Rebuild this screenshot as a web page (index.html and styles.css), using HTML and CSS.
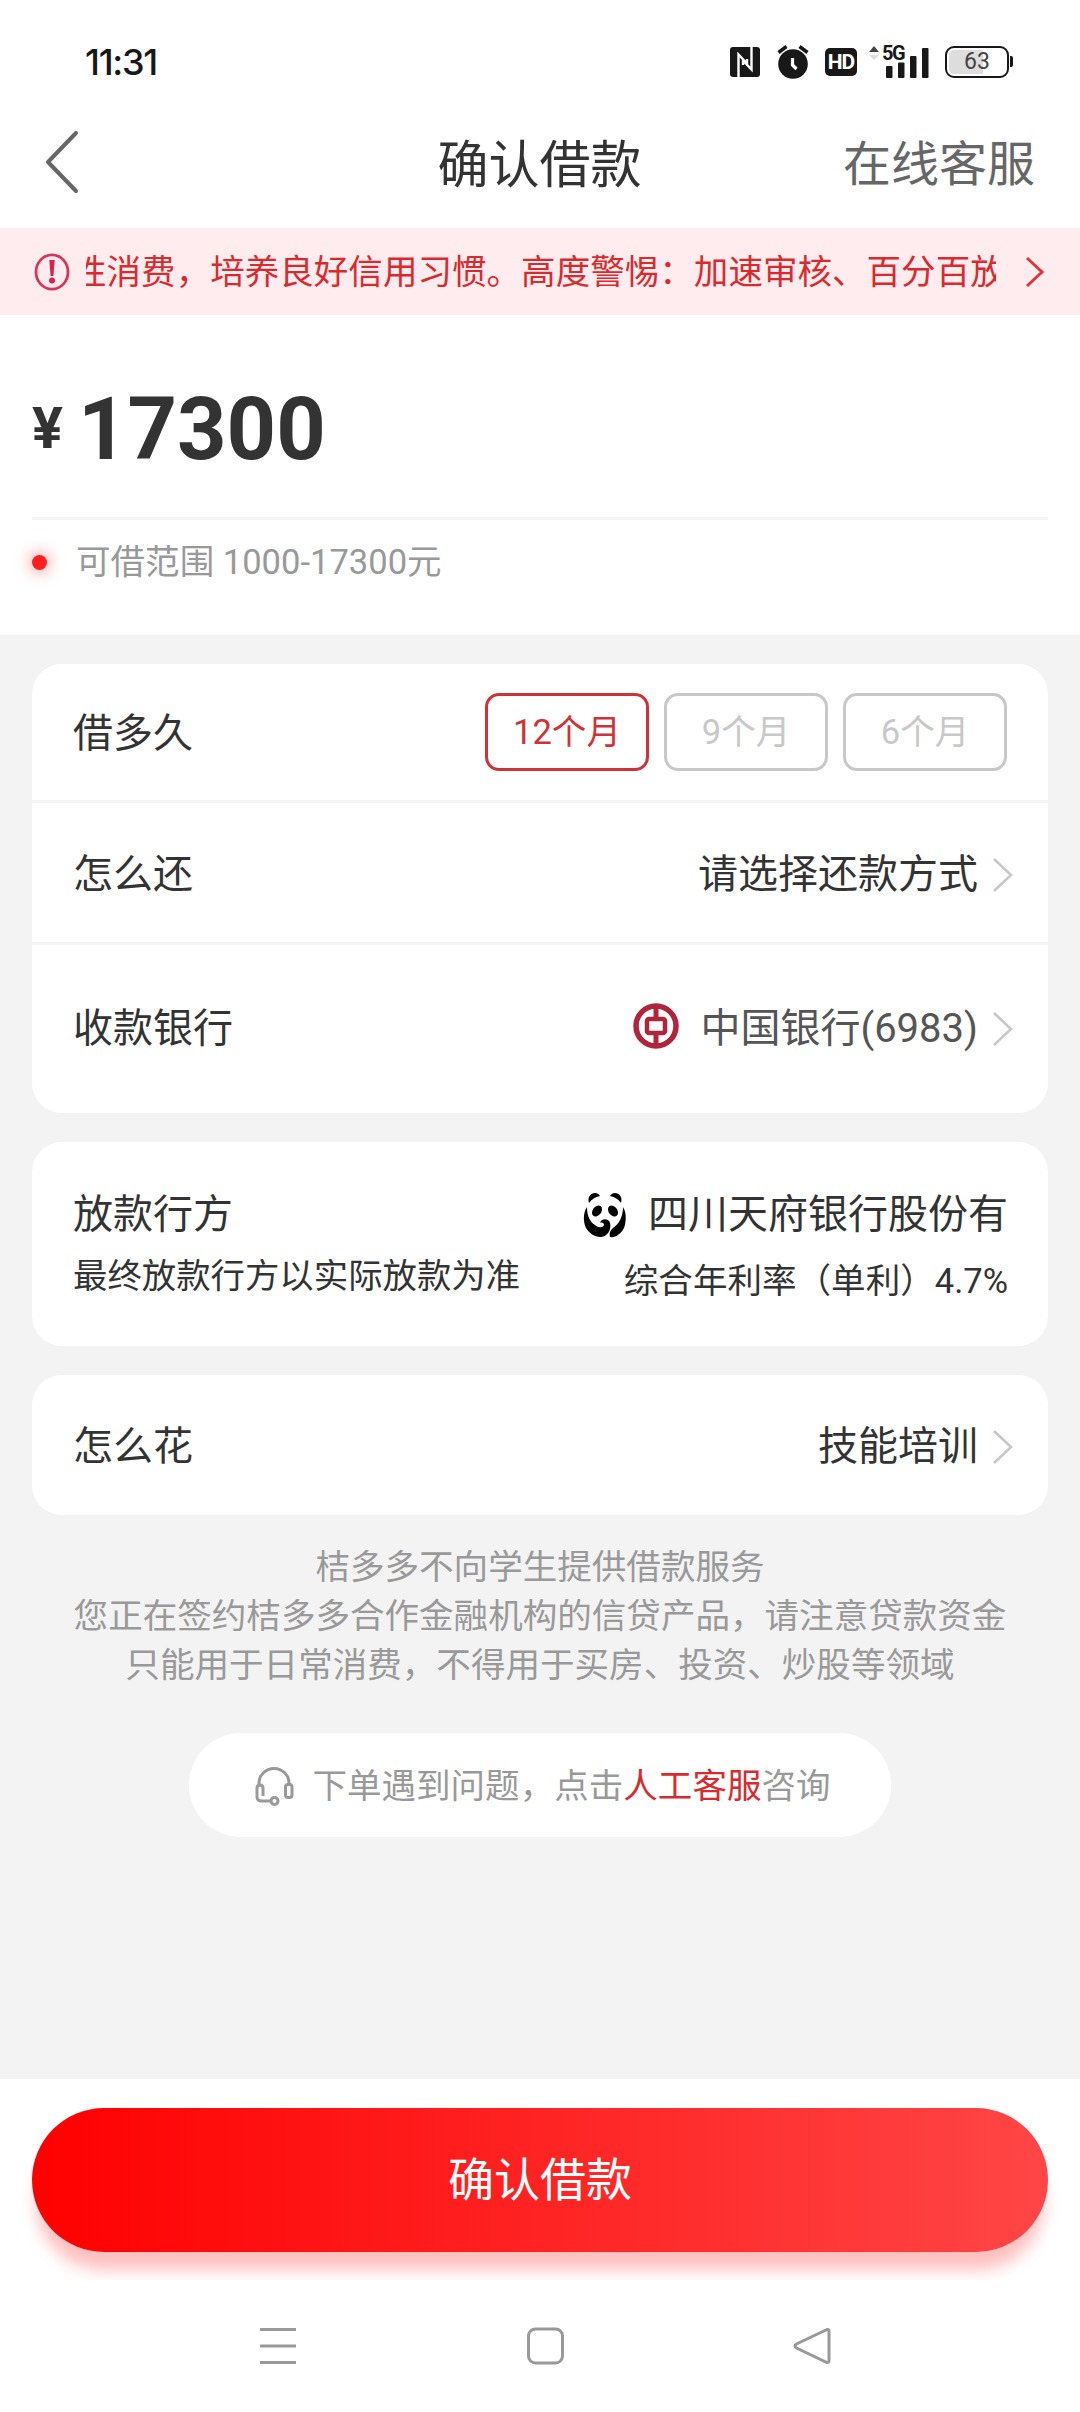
FILE: index.html
```html
<!DOCTYPE html>
<html lang="zh-CN">
<head>
    <meta charset="UTF-8">
    <meta name="viewport" content="width=device-width, initial-scale=1.0">
    <title>确认借款</title>
    <link rel="stylesheet" href="styles.css">
</head>
<body>
    <div class="status-bar">
        <span class="time">11:31</span>
        <div class="status-icons">
            <svg class="icon-nfc" width="30" height="30" viewBox="0 0 30 30">
                <rect width="30" height="30" rx="3" fill="#181818"/>
                <path d="M8.500 30V7.500l8.500 9V12M21.500 0v22.500l-8.500-9V18" fill="none" stroke="#fff" stroke-width="2.400"/>
            </svg>
            <svg class="icon-alarm" width="32" height="34" viewBox="0 0 32 34">
                <circle cx="16" cy="19" r="14.800" fill="#181818"/>
                <path d="M1.500 7.500L9.500 1.500M30.500 7.500L22.500 1.500" stroke="#181818" stroke-width="3.500"/>
                <path d="M15.500 13v7l4 4" fill="none" stroke="#fff" stroke-width="3.200"/>
            </svg>
            <span class="hd">HD</span>
            <div class="signal">
                <svg width="62" height="34" viewBox="0 0 62 34">
                    <path d="M1 7l5-6 5 6z" fill="#444"/>
                    <path d="M1 10l5 5 5-5z" fill="#ddd"/>
                    <g fill="#181818">
                        <rect x="18" y="21" width="6.500" height="12" rx="1"/>
                        <rect x="30" y="17.500" width="6.500" height="15.500" rx="1"/>
                        <rect x="42" y="11" width="6.500" height="22" rx="1"/>
                        <rect x="54" y="3" width="6.500" height="30" rx="1"/>
                    </g>
                </svg>
                <span class="net">5G</span>
            </div>
            <div class="battery"><span>63</span></div>
        </div>
    </div>

    <header class="nav-bar">
        <svg class="back" width="36" height="64" viewBox="0 0 36 64">
            <path d="M32 3L4 32 32 61" fill="none" stroke="#666" stroke-width="4" stroke-linecap="round" stroke-linejoin="round"/>
        </svg>
        <h1>确认借款</h1>
        <a class="service">在线客服</a>
    </header>

    <div class="notice">
        <svg width="36" height="38" viewBox="0 0 36 38">
            <ellipse cx="18" cy="19" rx="16" ry="17.200" fill="none" stroke="#d8345c" stroke-width="2.800"/>
            <path d="M15.300 7h5.400l-1.300 16h-2.800z" fill="#d8204c"/>
            <circle cx="18" cy="27.500" r="3" fill="#d8204c"/>
        </svg>
        <div class="notice-text"><span>性消费，培养良好信用习惯。高度警惕：加速审核、百分百放</span></div>
        <svg class="notice-arrow" width="20" height="32" viewBox="0 0 20 32">
            <path d="M2 2l15 14L2 30" fill="none" stroke="#e0353a" stroke-width="3"/>
        </svg>
    </div>

    <section class="amount">
        <div class="amount-value"><span class="yen">¥</span><span class="num">17300</span></div>
        <div class="range"><i class="dot"></i>可借范围 1000-17300元</div>
    </section>

    <main class="content">
        <div class="card">
            <div class="row row-term">
                <span>借多久</span>
                <div class="terms">
                    <button class="term active">12个月</button>
                    <button class="term">9个月</button>
                    <button class="term">6个月</button>
                </div>
            </div>
            <div class="row row-repay">
                <span>怎么还</span>
                <div class="value">请选择还款方式<svg class="arrow" width="20" height="34" viewBox="0 0 20 34"><path d="M1 1l17 16L1 33"/></svg></div>
            </div>
            <div class="row row-bank">
                <span>收款银行</span>
                <div class="value gray">
                    <svg class="boc" width="46" height="46" viewBox="0 0 46 46">
                        <circle cx="23" cy="23" r="20" fill="none" stroke="#b0243c" stroke-width="5.500"/>
                        <path d="M23 3v13M23 30v13" stroke="#b0243c" stroke-width="5"/>
                        <rect x="14" y="16" width="18" height="14" rx="2" fill="none" stroke="#b0243c" stroke-width="4.500"/>
                    </svg>中国银行(6983)<svg class="arrow" width="20" height="34" viewBox="0 0 20 34"><path d="M1 1l17 16L1 33"/></svg></div>
            </div>
        </div>

        <div class="card lender">
            <div class="lender-left">
                <div class="lender-title">放款行方</div>
                <div class="lender-note">最终放款行方以实际放款为准</div>
            </div>
            <div class="lender-right">
                <div class="lender-name">
                    <svg class="panda" width="44" height="46" viewBox="0 0 44 46">
                        <path d="M6 11C4 5 8 1 12 1c2 0 4 1 5 3-5 1-8 3-11 7zM38 11c2-6-2-10-6-10-2 0-4 1-5 3 5 1 8 3 11 7z"/>
                        <ellipse cx="14" cy="19" rx="4.300" ry="6" transform="rotate(38 14 19)"/>
                        <ellipse cx="30" cy="19" rx="4.300" ry="6" transform="rotate(-38 30 19)"/>
                        <path d="M4 15C0 21 0 30 3 36c4 7 14 12 20 7 4-3 5-8 4-12-1-5-9-5-10 0 2-1 4 0 4 2-1 3-6 3-9 0C7 30 4 24 4 15z"/>
                        <path d="M40 15c4 6 3 16 1 21-3 6-9 10-14 9-1-4 0-6 3-9 6-4 10-11 10-21z"/>
                    </svg>四川天府银行股份有</div>
                <div class="lender-rate">综合年利率（单利）4.7%</div>
            </div>
        </div>

        <div class="card">
            <div class="row row-use">
                <span>怎么花</span>
                <div class="value">技能培训<svg class="arrow" width="20" height="34" viewBox="0 0 20 34"><path d="M1 1l17 16L1 33"/></svg></div>
            </div>
        </div>

        <p class="tips">桔多多不向学生提供借款服务<br>您正在签约桔多多合作金融机构的信贷产品，请注意贷款资金<br>只能用于日常消费，不得用于买房、投资、炒股等领域</p>

        <div class="help">
            <svg width="40" height="40" viewBox="0 0 40 40" fill="none" stroke="#999" stroke-width="3">
                <path d="M5 19v-2a15 14.500 0 0 1 30 0v2"/>
                <path d="M9 30v-8q0-3-3-3t-3 3v9q0 4 5 4h9"/>
                <rect x="31.500" y="18.500" width="6.500" height="13" rx="2.500"/>
                <circle cx="20.500" cy="35" r="3.500"/>
            </svg>
            <span>下单遇到问题，点击<em>人工客服</em>咨询</span>
        </div>
    </main>

    <footer class="submit-bar">
        <button class="submit">确认借款</button>
    </footer>

    <div class="system-nav">
        <svg width="38" height="38" viewBox="0 0 38 38"><path d="M1 2.500h36M1 19h36M1 35.500h36"/></svg>
        <svg width="38" height="38" viewBox="0 0 38 38"><rect x="2.500" y="2" width="34" height="34" rx="7"/></svg>
        <svg width="38" height="38" viewBox="0 0 38 38"><path d="M34 2.500L3.500 17q-3 2 0 4L34 35.500q2 .5 2-2v-29q0-2.500-2-2z"/></svg>
    </div>
</body>
</html>
```
FILE: styles.css
```css
* {
    box-sizing: border-box;
}

body {
    margin: 0;
    width: 1080px;
    height: 2412px;
    display: flex;
    flex-direction: column;
    overflow: hidden;
    background-color: #fff;
    color: #333;
    font-family: Roboto, 'Noto Sans CJK SC', sans-serif;
    font-size: 40px;
    line-height: 1;
}

button {
    font-family: inherit;
    line-height: 1;
    padding: 0;
    cursor: pointer;
}

svg {
    display: block;
    flex-shrink: 0;
}

/* 系统状态栏 */
.status-bar {
    height: 100px;
    padding: 24px 71px 0 85px;
    display: flex;
    justify-content: space-between;
    align-items: center;
    color: #181818;
}

.time {
    font-family: Inter, sans-serif;
    font-size: 36px;
    font-weight: 500;
    letter-spacing: -1.3px;
}

.status-icons {
    display: flex;
    align-items: center;
}

.icon-alarm {
    margin-left: 17px;
}

.hd {
    width: 32px;
    height: 28px;
    margin-left: 16px;
    border-radius: 5px;
    background-color: #181818;
    color: #fff;
    font-size: 21px;
    font-weight: 700;
    line-height: 29px;
    text-align: center;
    letter-spacing: -1px;
}

.signal {
    position: relative;
    margin-left: 11px;
}

/* 5G 叠在信号格上方 */
.net {
    position: absolute;
    left: 14px;
    top: -1px;
    font-size: 20px;
    font-weight: 700;
    line-height: 18px;
    letter-spacing: -1.5px;
}

.battery {
    position: relative;
    width: 64px;
    height: 32px;
    margin-left: 15px;
    border: 2.5px solid #181818;
    border-radius: 9px;
    background: linear-gradient(90deg, #ddd 60%, #fff 60%) content-box;
    padding: 2px;
    color: #444;
    font-size: 23px;
    line-height: 24px;
    text-align: center;
}

.battery::after {
    content: '';
    position: absolute;
    right: -6px;
    top: 8px;
    width: 3px;
    height: 11px;
    background-color: #181818;
    border-radius: 0 2px 2px 0;
}

/* 标题栏 */
.nav-bar {
    height: 128px;
    padding: 0 45px 0 44px;
    display: grid;
    grid-template-columns: 1fr auto 1fr;
    align-items: center;
}

.back {
    margin-top: -4px;
}

.nav-bar h1 {
    margin: 0;
    padding-top: 2px;
    font-size: 51px;
    font-weight: 400;
}

.service {
    justify-self: end;
    padding-top: 2px;
    font-size: 48px;
    color: #666;
}

/* 滚动公告 */
.notice {
    height: 87px;
    padding: 0 35px 0 34px;
    display: flex;
    align-items: center;
    background-color: #ffecef;
    color: #d92b2e;
    font-size: 34.56px;
}

.notice-text {
    width: 910px;
    margin-left: 16px;
    overflow: hidden;
    white-space: nowrap;
    line-height: 50px;
}

.notice-text span {
    margin-left: -14px;
}

.notice-arrow {
    margin-left: auto;
}

/* 借款金额 */
.amount {
    height: 320px;
    padding: 0 32px;
}

.amount-value {
    height: 205px;
    display: flex;
    align-items: flex-start;
    border-bottom: 3px solid #f3f3f3;
    font-weight: 700;
}

.yen {
    font-size: 57.6px;
    line-height: 228px;
}

.num {
    margin-left: 15px;
    font-size: 86.4px;
    line-height: 229px;
}

.range {
    height: 85px;
    display: flex;
    align-items: center;
    color: #999;
    font-size: 34.56px;
}

.dot {
    width: 15px;
    height: 15px;
    margin-right: 29px;
    border-radius: 50%;
    background-color: #ff1f1f;
    box-shadow: 0 0 16px 1px rgba(255, 0, 0, 0.5);
}

/* 主体内容 */
.content {
    height: 1444px;
    padding: 29px 32px 0;
    background-color: #f3f3f3;
}

.card {
    margin-bottom: 29px;
    border-radius: 30px;
    background-color: #fff;
}

.row {
    padding: 0 40px 0 41px;
    display: flex;
    justify-content: space-between;
    align-items: center;
}

.row-term {
    height: 139px;
    border-bottom: 3px solid #f3f3f3;
}

.row-term > span {
    padding-top: 4px;
}

.row-repay {
    height: 142px;
    padding-top: 4px;
    border-bottom: 3px solid #f3f3f3;
}

.row-bank {
    height: 168px;
}

.row-use {
    height: 140px;
    padding-top: 3px;
}

.terms {
    display: flex;
    gap: 15px;
    margin-right: 1px;
}

.term {
    width: 164px;
    height: 78px;
    border: 3px solid #c8c8c8;
    border-radius: 14px;
    background-color: #fff;
    color: #c8c8c8;
    font-size: 34.56px;
}

.term.active {
    border-color: #cf3338;
    color: #cf3338;
}

.value {
    display: flex;
    align-items: center;
}

.value.gray {
    color: #555;
}

.arrow {
    margin-left: 15px;
    margin-right: -5px;
    fill: none;
    stroke: #c8c8c8;
    stroke-width: 2.6;
}

.boc {
    margin-right: 21px;
    margin-bottom: 6px;
}

.lender {
    height: 204px;
    padding: 0 40px 0 41px;
    display: flex;
    justify-content: space-between;
}

.lender-left {
    padding-top: 53px;
}

.lender-note {
    margin-top: 24px;
    font-size: 34.4px;
}

.lender-right {
    padding-top: 50px;
}

.lender-name {
    display: flex;
    align-items: center;
}

.panda {
    margin-right: 21px;
    fill: #000;
}

.lender-rate {
    margin-top: 26px;
    font-size: 34.56px;
    text-align: right;
}

.tips {
    margin: -1px 0 0;
    color: #999;
    font-size: 34.56px;
    line-height: 49px;
    text-align: center;
}

.help {
    width: 702px;
    height: 104px;
    margin: 43px auto 0;
    padding: 2px 0 0 5px;
    border-radius: 52px;
    display: flex;
    justify-content: center;
    align-items: center;
    gap: 18px;
    background-color: #fff;
    color: #999;
    font-size: 34.56px;
}

.help em {
    color: #d92b2e;
    font-style: normal;
}

/* 底部按钮 */
.submit-bar {
    height: 201px;
    padding: 29px 32px 0;
    overflow: hidden;
}

.submit {
    display: block;
    width: 100%;
    height: 144px;
    border: 0;
    border-radius: 72px;
    background: linear-gradient(90deg, #ff0000, #ff4646);
    box-shadow: 0 22px 16px -4px rgba(255, 0, 0, 0.25);
    color: #fff;
    font-size: 46px;
}

/* 系统导航键 */
.system-nav {
    height: 132px;
    padding: 47px 249px 0 259px;
    display: flex;
    justify-content: space-between;
}

.system-nav svg {
    fill: none;
    stroke: #999;
    stroke-width: 3;
}
```
